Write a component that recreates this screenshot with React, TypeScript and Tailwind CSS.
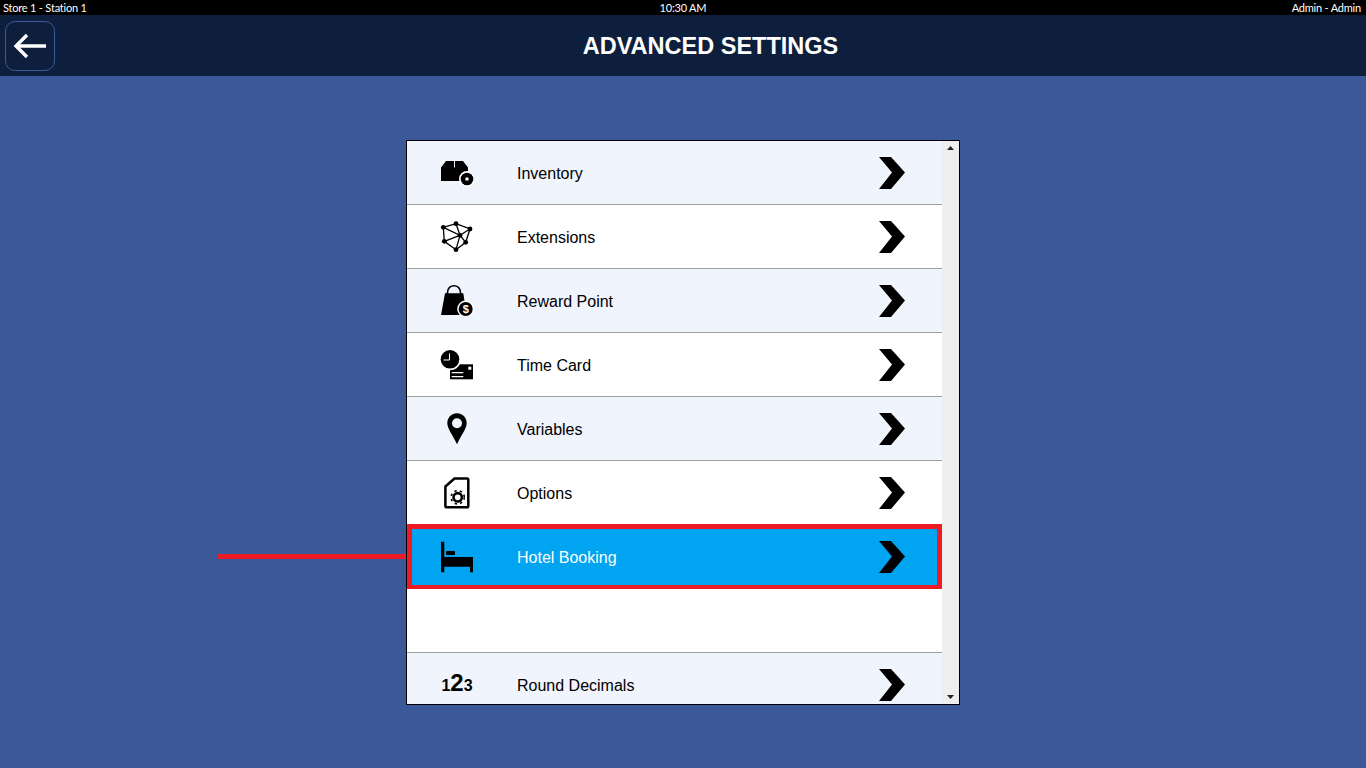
import type { ReactNode } from 'react'

const InventoryIcon = () => (
  <svg viewBox="0 0 34 34" className="h-[34px] w-[34px]">
    <path d="M6 5H14V11.5H1ZM15 5H23L28 11.5H15ZM1 11.5H28V25H1Z" fill="#000" />
    <circle cx="27" cy="23" r="8" fill="#fff" />
    <circle cx="27" cy="23" r="6.3" fill="#000" />
    <circle cx="27" cy="23" r="1.8" fill="#fff" />
  </svg>
)

const ExtensionsIcon = () => {
  const nodes = [[3.3, 7.3], [16, 3.7], [30, 9], [20, 15.3], [4.3, 21.3], [16, 29.7], [25.7, 22.3]]
  return (
    <svg viewBox="0 0 34 34" className="h-[34px] w-[34px]">
      <path
        d="M3.3 7.3L16 3.7L30 9L20 15.3L3.3 7.3L4.3 21.3L16 29.7L25.7 22.3L30 9M16 3.7L20 15.3L16 29.7M4.3 21.3L20 15.3L25.7 22.3"
        fill="none"
        stroke="#000"
        strokeWidth="1.3"
      />
      {nodes.map(([x, y]) => (
        <circle key={`${x}-${y}`} cx={x} cy={y} r="2.4" fill="#000" />
      ))}
    </svg>
  )
}

const RewardIcon = () => (
  <svg viewBox="0 0 34 34" className="h-[34px] w-[34px]">
    <path d="M7.5 10V8.5C7.5 -0.5 20.5 -0.5 20.5 8.5V10" fill="none" stroke="#000" strokeWidth="1.6" />
    <path d="M5 9.3H23.3L26.7 31H1Z" fill="#000" />
    <circle cx="25.7" cy="25" r="8.5" fill="#fff" />
    <circle cx="25.7" cy="25" r="7" fill="#000" />
    <text x="25.7" y="29" textAnchor="middle" fontSize="11" fontWeight="700" fontFamily="Liberation Sans, sans-serif" fill="#fff">
      $
    </text>
  </svg>
)

const TimeCardIcon = () => (
  <svg viewBox="0 0 34 34" className="h-[34px] w-[34px]">
    <rect x="10" y="16.3" width="23" height="15" fill="#000" />
    <circle cx="10" cy="11.3" r="11" fill="#fff" />
    <circle cx="10" cy="11.3" r="9.3" fill="#000" />
    <path d="M9.5 5.5V12H3.5" fill="none" stroke="#fff" strokeWidth="1" />
    <path d="M11.7 24.7H23.3M11.7 28.7H23.3" stroke="#fff" strokeWidth="1.2" />
    <rect x="28.3" y="18.7" width="3" height="3" fill="#fff" />
  </svg>
)

const PinIcon = () => (
  <svg viewBox="0 0 34 34" className="h-[34px] w-[34px]">
    <path
      fillRule="evenodd"
      d="M17 1.3C11.6 1.3 7.3 5.6 7.3 11C7.3 17 13 23 17 32.3C21 23 26.7 17 26.7 11C26.7 5.6 22.4 1.3 17 1.3ZM17 6.3A5 5 0 1 1 17 16.3A5 5 0 1 1 17 6.3Z"
      fill="#000"
    />
  </svg>
)

const OptionsIcon = () => (
  <svg viewBox="0 0 34 34" className="h-[34px] w-[34px]">
    <path
      d="M14.5 2.5H27C27.8 2.5 28.3 3 28.3 3.8V30C28.3 30.8 27.8 31.3 27 31.3H6.6C5.8 31.3 5.4 30.8 5.4 30V10.5Z"
      fill="none"
      stroke="#000"
      strokeWidth="2.5"
      strokeLinejoin="round"
    />
    <circle cx="17.7" cy="21.3" r="4.2" fill="none" stroke="#000" strokeWidth="2.6" />
    <circle cx="17.7" cy="21.3" r="6.6" fill="none" stroke="#000" strokeWidth="1.6" strokeDasharray="2.4 3.1" />
  </svg>
)

const BedIcon = () => (
  <svg viewBox="0 0 34 34" className="h-[34px] w-[34px]">
    <path d="M1 1.7H4.3V17H33V32.3H30V26.7H4.3V32.3H1Z" fill="#000" />
    <rect x="6" y="11" width="9" height="4" rx="0.8" fill="#000" />
  </svg>
)

const NumbersIcon = () => (
  <div className="flex h-[34px] w-[34px] items-baseline justify-center font-['Liberation_Sans',sans-serif] font-bold leading-[28px] text-black">
    <span className="text-[16px]">1</span>
    <span className="text-[24px]">2</span>
    <span className="text-[16px]">3</span>
  </div>
)

const Chevron = () => (
  <svg viewBox="0 0 26 32" className="ml-auto mr-[37px] h-[32px] w-[26px]">
    <path d="M0 0H12L26 15.5L12 32H0L13 15.5Z" fill="#000" />
  </svg>
)

type RowProps = {
  icon?: ReactNode
  label?: string
  tinted?: boolean
  active?: boolean
}

function Row({ icon, label, tinted, active }: RowProps) {
  const bg = active ? 'bg-[#00a4f1] text-white' : tinted ? 'bg-[#f0f4fd] text-black' : 'bg-white text-black'
  return (
    <div className={`relative flex h-[64px] shrink-0 items-center border-b border-[#a0a0a0] pl-[33px] ${bg}`}>
      {icon}
      {label && <span className="ml-[43px] mt-[2px] text-[16px] leading-[20px]">{label}</span>}
      {label && <Chevron />}
      {active && (
        <>
          <div className="absolute -top-px bottom-[-2px] left-0 right-0 border-[5px] border-[#ed1c24]" />
          <div className="absolute left-[-189px] top-[29px] h-[5px] w-[188px] bg-[#ed1c24]" />
        </>
      )}
    </div>
  )
}

export default function App() {
  return (
    <div className="flex h-screen w-full flex-col overflow-hidden bg-[#3b5998] font-['Liberation_Sans',sans-serif]">
      {/* Status strip */}
      <div className="grid h-[15px] shrink-0 grid-cols-3 items-center bg-black px-[3px] font-['Lato',sans-serif] text-[11px] leading-[15px] tracking-[-0.2px] text-white">
        <span>Store 1 - Station 1</span>
        <span className="text-center">10:30 AM</span>
        <span className="pr-[2px] text-right">Admin - Admin</span>
      </div>

      {/* Header */}
      <div className="flex h-[61px] shrink-0 items-center bg-[#0d1f3c] pl-[5px]">
        <button className="flex h-[50px] w-[50px] items-center justify-center rounded-[10px] border border-[#3b5998]">
          <svg viewBox="0 0 34 26" className="h-[26px] w-[34px]">
            <path d="M14 2L3 13L14 24M3 13H33" fill="none" stroke="#fff" strokeWidth="3.4" />
          </svg>
        </button>
        <h1 className="flex-1 text-center text-[23.5px] font-bold leading-[28px] text-white">ADVANCED SETTINGS</h1>
      </div>

      {/* Settings list */}
      <div className="mx-auto mt-[64px] flex h-[565px] w-[554px] border border-black bg-white">
        <div className="flex min-w-0 flex-1 flex-col">
          <Row icon={<InventoryIcon />} label="Inventory" tinted />
          <Row icon={<ExtensionsIcon />} label="Extensions" />
          <Row icon={<RewardIcon />} label="Reward Point" tinted />
          <Row icon={<TimeCardIcon />} label="Time Card" />
          <Row icon={<PinIcon />} label="Variables" tinted />
          <Row icon={<OptionsIcon />} label="Options" />
          <Row icon={<BedIcon />} label="Hotel Booking" active />
          <Row />
          <div className="flex min-h-0 flex-1 items-start overflow-hidden bg-[#f0f4fd] pl-[33px] pt-[16px] text-black">
            <NumbersIcon />
            <span className="ml-[43px] mt-[7px] text-[16px] leading-[20px]">Round Decimals</span>
            <Chevron />
          </div>
        </div>

        {/* Scrollbar */}
        <div className="flex w-[17px] shrink-0 flex-col items-center justify-between bg-[#eeeeee] py-[5px]">
          <svg viewBox="0 0 7 4" className="h-[4px] w-[7px]">
            <path d="M3.5 0L7 4H0Z" fill="#222" />
          </svg>
          <svg viewBox="0 0 7 4" className="h-[4px] w-[7px]">
            <path d="M0 0H7L3.5 4Z" fill="#222" />
          </svg>
        </div>
      </div>
    </div>
  )
}
